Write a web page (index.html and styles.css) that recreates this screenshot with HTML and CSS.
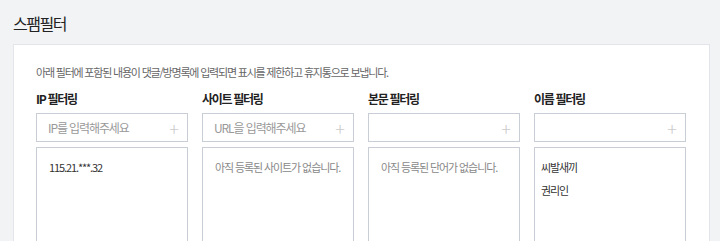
FILE: index.html
```html
<!DOCTYPE html>
<html lang="ko">
<head>
  <meta charset="UTF-8">
  <title>스팸필터</title>
  <link rel="stylesheet" href="styles.css">
</head>
<body>
  <h1 class="title">스팸필터</h1>

  <div class="card">
    <p class="desc">아래 필터에 포함된 내용이 댓글/방명록에 입력되면 표시를 제한하고 휴지통으로 보냅니다.</p>

    <div class="filters">
      <div class="filter">
        <h2 class="filter-name">IP 필터링</h2>
        <div class="field">
          <input type="text" placeholder="IP를 입력해주세요">
          <span class="add">+</span>
        </div>
        <ul class="list">
          <li>115.21.***.32</li>
        </ul>
      </div>

      <div class="filter">
        <h2 class="filter-name">사이트 필터링</h2>
        <div class="field">
          <input type="text" placeholder="URL을 입력해주세요">
          <span class="add">+</span>
        </div>
        <ul class="list">
          <li class="empty">아직 등록된 사이트가 없습니다.</li>
        </ul>
      </div>

      <div class="filter">
        <h2 class="filter-name">본문 필터링</h2>
        <div class="field">
          <input type="text">
          <span class="add">+</span>
        </div>
        <ul class="list">
          <li class="empty">아직 등록된 단어가 없습니다.</li>
        </ul>
      </div>

      <div class="filter">
        <h2 class="filter-name">이름 필터링</h2>
        <div class="field">
          <input type="text">
          <span class="add">+</span>
        </div>
        <ul class="list list-names">
          <li>씨발새끼</li>
          <li>권리인</li>
        </ul>
      </div>
    </div>
  </div>
</body>
</html>
```

FILE: styles.css
```css
body {
  margin: 0;
  padding: 0 10px 0 13px;
  background-color: #f2f3f5;
  font-family: "Noto Sans CJK KR", "Noto Sans", sans-serif;
  color: #222;
}
.title {
  margin: 0;
  padding: 12px 0 9px;
  font-size: 16px;
  font-weight: 400;
  line-height: 23px;
  letter-spacing: -1.5px;
}
.card {
  background-color: #fff;
  border: 1px solid #e3e5ea;
  padding: 18px 22px 0;
  height: 300px;
}
.desc {
  margin: 0 0 9px;
  font-size: 11px;
  line-height: 18px;
  color: #666;
  letter-spacing: -1.2px;
}
.filters {
  display: grid;
  grid-template-columns: repeat(4, 152px);
  column-gap: 14px;
}
.filter-name {
  margin: 0 0 5px;
  font-size: 12px;
  font-weight: 700;
  line-height: 18px;
  letter-spacing: -1.3px;
}
.field {
  display: flex;
  align-items: center;
  height: 29px;
  border: 1px solid #c9ced6;
  box-sizing: border-box;
  margin-bottom: 5px;
}
.field input {
  flex: 1;
  min-width: 0;
  border: 0;
  outline: 0;
  padding: 0 0 0 11px;
  font-family: inherit;
  font-size: 12px;
  letter-spacing: -1.1px;
  background: transparent;
}
.field input::placeholder {
  color: #999;
}
.add {
  width: 26px;
  font-size: 18px;
  font-weight: 300;
  color: #ccc;
  text-align: center;
}
.list {
  list-style: none;
  margin: 0;
  padding: 8px 12px;
  height: 200px;
  border: 1px solid #c9ced6;
}
.list-names {
  padding-left: 6px;
}
.list li {
  font-size: 11px;
  line-height: 23px;
  color: #333;
  letter-spacing: -1.1px;
}
.list li.empty {
  color: #888;
}
```
